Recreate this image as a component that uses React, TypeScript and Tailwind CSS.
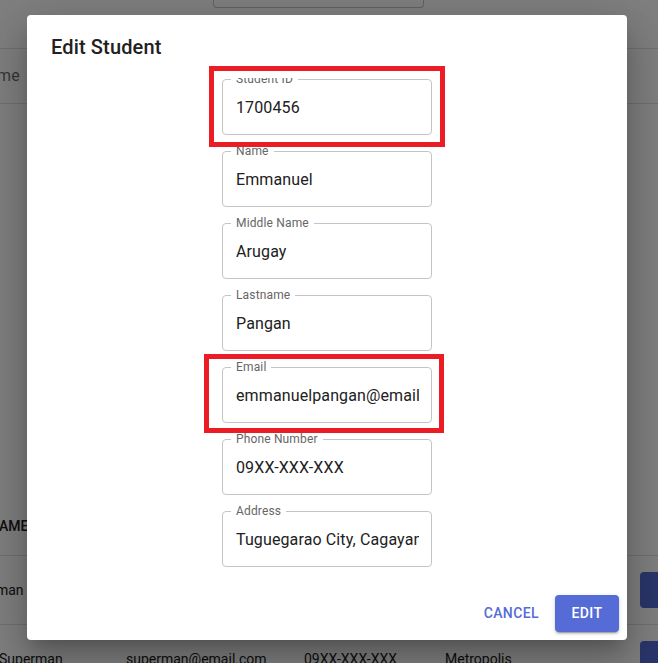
import React from "react";

const fields: { label: string; value: string }[] = [
  { label: "Student ID", value: "1700456" },
  { label: "Name", value: "Emmanuel" },
  { label: "Middle Name", value: "Arugay" },
  { label: "Lastname", value: "Pangan" },
  { label: "Email", value: "emmanuelpangan@email.com" },
  { label: "Phone Number", value: "09XX-XXX-XXX" },
  { label: "Address", value: "Tuguegarao City, Cagayan" },
];

function Field({ label, value }: { label: string; value: string }) {
  return (
    <div className="relative w-[210px] h-[56px] shrink-0 rounded-[4px] border border-[#c4c4c4]">
      <span className="absolute left-[8px] top-[-9px] px-[5px] bg-white text-[12px] leading-[16px] tracking-[0.15px] text-[#666666] whitespace-nowrap">
        {label}
      </span>
      <div className="h-full flex items-center pl-[13px] pr-[12px] overflow-hidden">
        <span className="block w-full overflow-hidden whitespace-nowrap text-[16px] leading-[23px] tracking-[0.12px] text-[#212121]">
          {value}
        </span>
      </div>
    </div>
  );
}

export default function App() {
  return (
    <div
      className="relative w-[658px] h-[663px] overflow-hidden bg-white"
      style={{ fontFamily: "Roboto, 'Liberation Sans', sans-serif" }}
    >
      {/* page behind the modal */}
      <div className="flex flex-col text-[#212121]">
        <div className="h-[49px] border-b border-[#e0e0e0]">
          <div className="ml-[213px] w-[211px] h-[8px] border-x border-b border-[#c4c4c4] rounded-b-[4px]" />
        </div>
        <div className="h-[55px] border-b border-[#e0e0e0] flex items-center">
          <span className="-ml-[23px] text-[16px] text-black/60">Name</span>
        </div>
        <div className="h-[393px]" />
        <div className="h-[59px] border-b border-[#e0e0e0] grid grid-cols-[128px_178px_141px_195px_80px] items-center -ml-[2px] text-[14px] font-medium">
          <span className="-ml-[9px]">NAME</span>
          <span>EMAIL</span>
          <span>PHONE</span>
          <span>ADDRESS</span>
          <span />
        </div>
        <div className="h-[69px] border-b border-[#e0e0e0] grid grid-cols-[128px_178px_141px_195px_80px] items-center -ml-[2px] text-[14px]">
          <span className="-ml-[23px]">Batman</span>
          <span>batman@email.com</span>
          <span>09XX-XXX-XXX</span>
          <span>Gotham</span>
          <div className="h-[36px] rounded-[4px] bg-[#556cd6]" />
        </div>
        <div className="h-[69px] border-b border-[#e0e0e0] grid grid-cols-[128px_178px_141px_195px_80px] items-center -ml-[2px] text-[14px]">
          <span className="ml-[1px]">Superman</span>
          <span>superman@email.com</span>
          <span>09XX-XXX-XXX</span>
          <span>Metropolis</span>
          <div className="h-[36px] rounded-[4px] bg-[#556cd6]" />
        </div>
      </div>

      {/* backdrop */}
      <div className="absolute inset-0 bg-black/50" />

      {/* dialog */}
      <div className="absolute left-[27px] top-[15px] w-[600px] flex flex-col bg-white rounded-[4px] shadow-[0px_11px_15px_-7px_rgba(0,0,0,0.2),0px_24px_38px_3px_rgba(0,0,0,0.14),0px_9px_46px_8px_rgba(0,0,0,0.12)]">
        <h2 className="px-6 pt-4 pb-[15px] text-[20px] leading-8 font-medium text-[#212121] tracking-[0.15px]">
          Edit Student
        </h2>
        <div className="h-[509px] overflow-hidden px-6">
          <div className="pt-[1px] pb-5 flex flex-col items-center gap-4">
            {fields.map((f) => (
              <Field key={f.label} label={f.label} value={f.value} />
            ))}
          </div>
        </div>
        <div className="p-2 flex justify-end items-center gap-2">
          <button className="px-2 py-[6px] min-w-[64px] rounded-[4px] text-[14px] leading-[24.5px] font-medium uppercase tracking-[0.4px] text-[#556cd6]">
            Cancel
          </button>
          <button className="px-4 py-[6px] min-w-[64px] rounded-[4px] text-[14px] leading-[24.5px] font-medium uppercase tracking-[0.4px] text-white bg-[#556cd6] shadow-[0px_3px_1px_-2px_rgba(0,0,0,0.2),0px_2px_2px_0px_rgba(0,0,0,0.14),0px_1px_5px_0px_rgba(0,0,0,0.12)]">
            Edit
          </button>
        </div>
      </div>

      {/* annotation boxes */}
      <div className="absolute left-[209px] top-[66px] w-[236px] h-[81px] border-[5px] border-[#ec1c24]" />
      <div className="absolute left-[204px] top-[354px] w-[240px] h-[79px] border-[5px] border-[#ec1c24]" />
    </div>
  );
}
